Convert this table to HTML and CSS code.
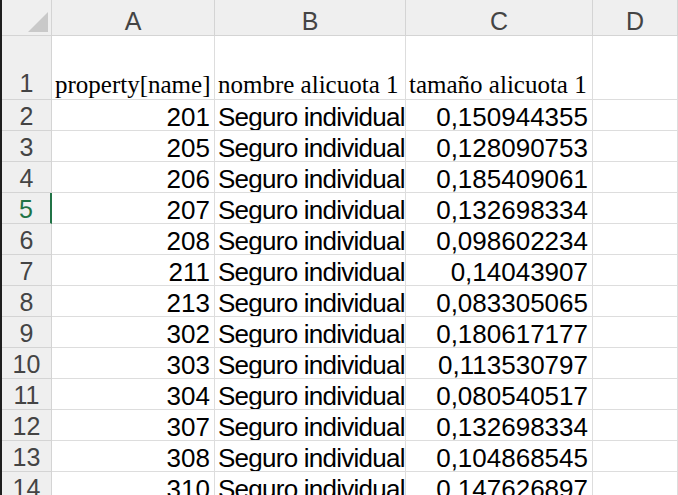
FILE: index.html
```html
<!DOCTYPE html>
<html>
<head>
<meta charset="utf-8">
<link rel="stylesheet" href="styles.css">
</head>
<body>
<div class="frame">
  <div class="strip"></div>
  <div class="sheet">
    <div class="hd corner"><span class="tri"></span></div>
    <div class="hd col">A</div>
    <div class="hd col">B</div>
    <div class="hd col">C</div>
    <div class="hd col">D</div>

    <div class="hd rn tall">1</div>
    <div class="c serif tall">property[name]</div>
    <div class="c serif tall">nombre alicuota 1</div>
    <div class="c serif tall">tamaño alicuota 1</div>
    <div class="c tall"></div>

    <div class="hd rn">2</div><div class="c num">201</div><div class="c txt">Seguro individual</div><div class="c num">0,150944355</div><div class="c"></div>
    <div class="hd rn">3</div><div class="c num">205</div><div class="c txt">Seguro individual</div><div class="c num">0,128090753</div><div class="c"></div>
    <div class="hd rn">4</div><div class="c num">206</div><div class="c txt">Seguro individual</div><div class="c num">0,185409061</div><div class="c"></div>
    <div class="hd rn sel">5</div><div class="c num">207</div><div class="c txt">Seguro individual</div><div class="c num">0,132698334</div><div class="c"></div>
    <div class="hd rn">6</div><div class="c num">208</div><div class="c txt">Seguro individual</div><div class="c num">0,098602234</div><div class="c"></div>
    <div class="hd rn">7</div><div class="c num">211</div><div class="c txt">Seguro individual</div><div class="c num">0,14043907</div><div class="c"></div>
    <div class="hd rn">8</div><div class="c num">213</div><div class="c txt">Seguro individual</div><div class="c num">0,083305065</div><div class="c"></div>
    <div class="hd rn">9</div><div class="c num">302</div><div class="c txt">Seguro individual</div><div class="c num">0,180617177</div><div class="c"></div>
    <div class="hd rn">10</div><div class="c num">303</div><div class="c txt">Seguro individual</div><div class="c num">0,113530797</div><div class="c"></div>
    <div class="hd rn">11</div><div class="c num">304</div><div class="c txt">Seguro individual</div><div class="c num">0,080540517</div><div class="c"></div>
    <div class="hd rn">12</div><div class="c num">307</div><div class="c txt">Seguro individual</div><div class="c num">0,132698334</div><div class="c"></div>
    <div class="hd rn">13</div><div class="c num">308</div><div class="c txt">Seguro individual</div><div class="c num">0,104868545</div><div class="c"></div>
    <div class="hd rn">14</div><div class="c num">310</div><div class="c txt">Seguro individual</div><div class="c num">0,147626897</div><div class="c"></div>
  </div>
</div>
</body>
</html>
```

FILE: styles.css
```css
html, body {
  margin: 0;
  padding: 0;
  background: #ffffff;
  overflow: hidden;
}
.frame {
  display: flex;
  width: 678px;
  height: 495px;
  overflow: hidden;
}
.strip {
  width: 2px;
  flex: none;
  background: #1e1e1e;
}
.sheet {
  flex: 1;
  display: grid;
  grid-template-columns: 50px 163px 191px 187px 1fr;
  grid-template-rows: 36px 64px repeat(13, 31px);
  font-family: "Liberation Sans", Arial, sans-serif;
  font-size: 26px;
  line-height: 1;
  color: #000;
}
.sheet > div {
  box-sizing: border-box;
  border-right: 1px solid #dddddd;
  border-bottom: 1px solid #dddddd;
  white-space: nowrap;
  overflow: hidden;
}
.hd {
  background: #efefef;
  color: #444;
  font-size: 25px;
  display: flex;
  justify-content: center;
  align-items: flex-end;
}
.sheet > .hd {
  border-color: #d4d4d4;
}
.corner {
  position: relative;
}
.tri {
  position: absolute;
  right: 3px;
  bottom: 3px;
  width: 0;
  height: 0;
  border-left: 20px solid transparent;
  border-bottom: 20px solid #c9c9c9;
}
.col {
  padding-bottom: 1px;
}
.rn {
  padding-bottom: 1px;
}
.rn.tall {
  padding-bottom: 3px;
}
.sheet > .sel {
  color: #217346;
  border-right: 2px solid #217346;
}
.c {
  display: flex;
  align-items: flex-end;
  padding: 0 4px 0 2px;
}
.num {
  justify-content: flex-end;
}
.txt {
  letter-spacing: -0.75px;
  padding-left: 3px;
}
.serif {
  font-family: "Liberation Serif", "Times New Roman", serif;
  font-size: 25px;
  padding-left: 3px;
  padding-bottom: 2px;
}
```
